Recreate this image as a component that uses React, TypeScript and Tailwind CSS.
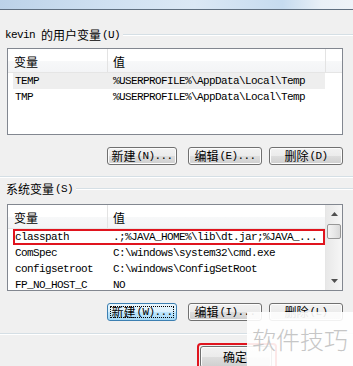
import React from "react";

const cjk = "font-['Noto_Sans_CJK_SC',sans-serif] text-[12px] leading-none";
const mono = "font-['Liberation_Mono','Noto_Sans_CJK_SC',monospace] text-[11px] tracking-[-0.6px] leading-none";

function Btn({ c, l, className, focused }: { c: string; l: string; className: string; focused?: boolean }) {
  return (
    <div
      className={
        "relative h-[18px] rounded-[3px] border flex items-center justify-center text-black " +
        (focused
          ? "border-[#3c7fb1] bg-[linear-gradient(#eaf6fd_0%,#d9f0fc_50%,#bee6fd_51%,#a7d9f5_100%)] "
          : "border-[#707070] bg-[linear-gradient(#f2f2f2_0%,#ebebeb_50%,#dddddd_51%,#cfcfcf_100%)] shadow-[inset_0_0_0_1px_#fcfcfc] ") +
        className
      }
    >
      <span className={cjk}>{c}</span>
      <span className={mono + " ml-[1px]"}>{l}</span>
      {focused && <span className="absolute inset-[2px] border border-dotted border-black rounded-[1px]" />}
    </div>
  );
}

function GroupLabel({ children, className }: { children: React.ReactNode; className: string }) {
  return (
    <div className={"h-[14px] flex items-center " + className}>
      <div className="flex items-center text-black">{children}</div>
      <div className="flex-1 ml-[3px] border-t border-[#d5dfe5] border-b border-b-white" />
    </div>
  );
}

function Header({ c2w }: { c2w: string }) {
  return (
    <div className="h-[24px] shrink-0 flex border-b border-[#e5e5e5] bg-[linear-gradient(#ffffff_0%,#ffffff_50%,#f7f8f9_51%,#f3f4f6_100%)]">
      <div className="w-[100px] border-r border-[#e3e3e3] pl-[6px] pt-[2px] flex items-center">
        <span className={cjk + " text-[12.5px]"}>变量</span>
      </div>
      <div className={c2w + " border-r border-[#e3e3e3] pl-[5px] pt-[2px] flex items-center"}>
        <span className={cjk + " text-[12.5px]"}>值</span>
      </div>
    </div>
  );
}

function Row({ n, v, sel, boxed }: { n: string; v: string; sel?: boolean; boxed?: boolean }) {
  return (
    <div className="h-4 shrink-0 flex">
      <div
        className={
          "ml-[5px] w-[312px] h-4 flex items-center pl-[2px] " +
          (sel ? "bg-[#eeeeee] " : "") +
          (boxed ? "ring-2 ring-inset ring-[#e0141e]" : "")
        }
      >
        <span className={mono + " w-[98px] whitespace-nowrap"}>{n}</span>
        <span className={mono + " whitespace-nowrap"}>{v}</span>
      </div>
    </div>
  );
}

function Arrow({ up }: { up?: boolean }) {
  return (
    <svg width="7" height="4" viewBox="0 0 7 4">
      {up ? <polygon points="0,4 7,4 3.5,0" fill="#505050" /> : <polygon points="0,0 7,0 3.5,4" fill="#505050" />}
    </svg>
  );
}

export default function App() {
  return (
    <div className="relative w-[353px] h-[366px] overflow-hidden bg-[#f0f0f0] flex flex-col [&>*]:shrink-0">
      <div className="h-[9px] bg-[linear-gradient(90deg,#bcd2e8_0%,#cfe0f1_30%,#dbe8f5_55%,#c6dbef_80%,#e9f0f7_91%,#eef3f8_100%)]" />
      <div className="h-px bg-[#5f6f80]" />

      <GroupLabel className="mt-[18px] ml-[5px]">
        <span className={mono}>kevin</span>
        <span className={cjk + " ml-[6px]"}>的用户变量</span>
        <span className={mono + " ml-[1px]"}>(U)</span>
      </GroupLabel>

      <div className="mt-[6px] ml-[7px] w-[336px] h-[87px] border border-[#828790] bg-white flex flex-col">
        <Header c2w="w-[218px]" />
        <Row n="TEMP" v="%USERPROFILE%\AppData\Local\Temp" sel />
        <Row n="TMP" v="%USERPROFILE%\AppData\Local\Temp" />
      </div>

      <div className="mt-[12px] flex">
        <Btn c="新建" l="(N)..." className="ml-[107px] w-[70px]" />
        <Btn c="编辑" l="(E)..." className="ml-[11px] w-[74px]" />
        <Btn c="删除" l="(D)" className="ml-[7px] w-[74px]" />
      </div>

      <div className="mt-[11px] border-t border-[#d5dfe5] border-b border-b-white" />

      <GroupLabel className="mt-[4px] ml-[6px]">
        <span className={cjk}>系统变量</span>
        <span className={mono + " ml-[1px]"}>(S)</span>
      </GroupLabel>

      <div className="mt-[8px] ml-[7px] w-[336px] h-[87px] border border-[#828790] bg-white flex">
        <div className="w-[317px] flex flex-col overflow-hidden">
          <Header c2w="w-[217px] border-r-0" />
          <Row n="classpath" v=".;%JAVA_HOME%\lib\dt.jar;%JAVA_..." boxed />
          <Row n="ComSpec" v="C:\windows\system32\cmd.exe" />
          <Row n="configsetroot" v="C:\windows\ConfigSetRoot" />
          <Row n="FP_NO_HOST_C" v="NO" />
        </div>
        <div className="w-[17px] flex flex-col border-l border-[#e6e6e6] bg-[linear-gradient(90deg,#e8e8e8,#f6f6f6)]">
          <div className="h-[18px] flex items-center justify-center">
            <Arrow up />
          </div>
          <div className="mt-px mx-[1px] h-[15px] rounded-[2px] border border-[#979797] bg-[linear-gradient(90deg,#f3f3f3,#e8e8e8_50%,#d9d9d9)]" />
          <div className="flex-1" />
          <div className="h-[18px] flex items-center justify-center">
            <Arrow />
          </div>
        </div>
      </div>

      <div className="mt-[12px] flex">
        <Btn c="新建" l="(W)..." className="ml-[107px] w-[70px]" focused />
        <Btn c="编辑" l="(I)..." className="ml-[11px] w-[74px]" />
        <Btn c="删除" l="(L)" className="ml-[7px] w-[74px]" />
      </div>

      <div className="mt-[12px] border-t border-[#d5dfe5] border-b border-b-white" />

      <div className="mt-[8px] ml-[197px] w-[80px] rounded-[4px] border-2 border-[#e0141e] p-px">
        <div className="h-[22px] w-[72px] rounded-[3px] border border-[#707070] bg-[linear-gradient(#f2f2f2_0%,#ebebeb_50%,#dddddd_51%,#cfcfcf_100%)] shadow-[inset_0_0_0_1px_#fcfcfc] flex items-center pl-[22px]">
          <span className={cjk}>确定</span>
        </div>
      </div>

      <div className="absolute right-0 bottom-0 w-[106px] h-[54px] bg-white/90 flex items-center justify-center">
        <span className="font-['Noto_Sans_CJK_SC',sans-serif] font-light text-[24px] leading-none text-[#c6c6c6]">软件技巧</span>
      </div>
    </div>
  );
}
